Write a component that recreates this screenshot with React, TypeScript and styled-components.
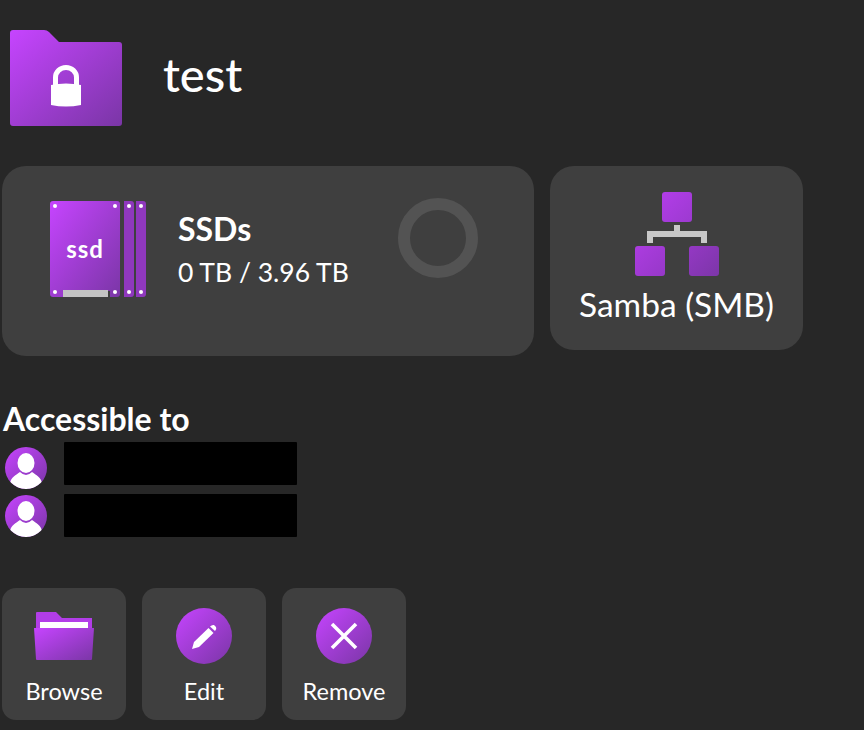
import React from 'react';
import styled, {createGlobalStyle} from "styled-components";

const GRADIENT = 'linear-gradient(135deg, #c644ff 0%, #7a36a6 100%)';

const GlobalStyle = createGlobalStyle`
    html, body {
        margin: 0;
        padding: 0;
        background-color: #272727;
    }
    body {
        font-family: "Lato", "Open Sans", sans-serif;
        color: #fff;
    }
`
const Page = styled.div`
    width: 864px;
    height: 730px;
    overflow: hidden;
    padding: 30px 0 0 2px;
    box-sizing: border-box;
`
const Header = styled.header`
    display: flex;
    align-items: center;
    gap: 41px;
    height: 96px;
    padding-left: 8px;
`
const Title = styled.h1`
    margin: -8px 0 0;
    font-size: 47px;
    font-weight: 500;
    line-height: 1;
`
const CardRow = styled.section`
    display: flex;
    align-items: flex-start;
    gap: 16px;
    margin-top: 40px;
`
const StorageCard = styled.article`
    display: flex;
    align-items: flex-start;
    box-sizing: border-box;
    width: 532px;
    height: 190px;
    padding: 32px 56px 0 48px;
    border-radius: 24px;
    background-color: #3f3f3f;
`
const StorageInfo = styled.div`
    margin: 13px 0 0 32px;
`
const StorageName = styled.h3`
    margin: 0;
    font-size: 32px;
    font-weight: 700;
    line-height: 36px;
`
const StorageSize = styled.p`
    margin: 9px 0 0;
    font-size: 26.5px;
    font-weight: 400;
    line-height: 32px;
`
const UsageRing = styled.div`
    box-sizing: border-box;
    width: 80px;
    height: 80px;
    margin-left: auto;
    border: 12px solid #535353;
    border-radius: 50%;
`
const SsdIcon = styled.svg`
    display: block;
    margin-top: 3px;
    flex: none;
`
const ProtocolCard = styled.article`
    display: flex;
    flex-direction: column;
    align-items: center;
    box-sizing: border-box;
    width: 253px;
    height: 184px;
    padding-top: 26px;
    border-radius: 24px;
    background-color: #3f3f3f;
`
const ProtocolLabel = styled.span`
    margin-top: 8px;
    font-size: 33.5px;
    line-height: 40px;
    white-space: nowrap;
`
const AccessSection = styled.section`
    margin-top: 46px;
`
const AccessTitle = styled.h2`
    margin: -1px 0 5px 1px;
    font-size: 32px;
    font-weight: 700;
    line-height: 36px;
`
const UserRow = styled.div<{$avatarTop: number}>`
    display: flex;
    align-items: flex-start;
    gap: 17px;
    height: 52px;
    padding-left: 3px;

    & > :first-child {
        margin-top: ${props => props.$avatarTop}px;
    }
`
const Avatar = styled.div`
    width: 42px;
    height: 42px;
    flex: none;
    overflow: hidden;
    border-radius: 50%;
    background: ${GRADIENT};
`
const Redacted = styled.div`
    width: 233px;
    height: 43px;
    border-radius: 1px;
    background-color: #000;
`
const Actions = styled.section`
    display: flex;
    gap: 16px;
    margin-top: 42px;
`
const ActionButton = styled.button`
    display: flex;
    flex-direction: column;
    align-items: center;
    box-sizing: border-box;
    width: 124px;
    height: 132px;
    padding: 20px 0 0;
    border: 0;
    border-radius: 14px;
    background-color: #3f3f3f;
    color: #fff;
    font-family: inherit;
    cursor: pointer;
`
const ActionIcon = styled.span<{$plain?: boolean}>`
    display: flex;
    align-items: center;
    justify-content: center;
    width: 56px;
    height: 56px;
    border-radius: 50%;
    background: ${props => props.$plain ? 'none' : GRADIENT};
`
const ActionLabel = styled.span`
    margin-top: 13px;
    font-size: 23.5px;
    line-height: 28px;
`

const Gradient = ({id}: {id: string}) => (
    <defs>
        <linearGradient id={id} x1="0" y1="0" x2="1" y2="1">
            <stop offset="0" stopColor="#c644ff"/>
            <stop offset="1" stopColor="#7a36a6"/>
        </linearGradient>
    </defs>
);

const LockedFolder = () => (
    <svg width="112" height="96" viewBox="0 0 112 96">
        <Gradient id="lockFolder"/>
        <path d="M3 0H34Q37 0 39 2L49 12H109Q112 12 112 15V93Q112 96 109 96H3Q0 96 0 93V3Q0 0 3 0Z" fill="url(#lockFolder)"/>
        <path d="M45.5 55V47.5A10.5 10 0 0 1 66.5 47.5V55" fill="none" stroke="#fff" strokeWidth="5"/>
        <path d="M41 55Q56 52 71 55V75Q56 78 41 75Z" fill="#fff"/>
    </svg>
);

const Ssd = () => (
    <SsdIcon width="96" height="96" viewBox="0 0 96 96">
        <Gradient id="ssdBody"/>
        <path d="M3 0H67Q70 0 70 3V93Q70 96 67 96H60V90H13V96H3Q0 96 0 93V3Q0 0 3 0Z" fill="url(#ssdBody)"/>
        <path d="M74 0H81Q84 0 84 3V93Q84 96 81 96H74Z" fill="#8f38bd"/>
        <path d="M86 0H93Q96 0 96 3V93Q96 96 93 96H86Z" fill="#8f38bd"/>
        <rect x="13" y="89" width="45" height="7" fill="#c4c4c4"/>
        <g fill="#fff">
            <circle cx="5" cy="5" r="2"/>
            <circle cx="65" cy="5" r="2"/>
            <circle cx="5" cy="91" r="2"/>
            <circle cx="65" cy="91" r="2"/>
            <circle cx="79" cy="5" r="2"/>
            <circle cx="91" cy="5" r="2"/>
            <circle cx="79" cy="91" r="2"/>
            <circle cx="91" cy="91" r="2"/>
        </g>
        <text x="35" y="57" textAnchor="middle" fill="#fff" fontSize="24" letterSpacing="1" fontWeight="700" fontFamily="Lato, sans-serif">ssd</text>
    </SsdIcon>
);

const Network = () => (
    <svg width="84" height="84" viewBox="0 0 84 84">
        <defs>
            <linearGradient id="netTop" x1="0" y1="0" x2="1" y2="1">
                <stop offset="0" stopColor="#b23de8"/>
                <stop offset="1" stopColor="#9c3ad0"/>
            </linearGradient>
            <linearGradient id="netLeft" x1="0" y1="0" x2="1" y2="1">
                <stop offset="0" stopColor="#ac3ce0"/>
                <stop offset="1" stopColor="#9638c8"/>
            </linearGradient>
            <linearGradient id="netRight" x1="0" y1="0" x2="1" y2="1">
                <stop offset="0" stopColor="#9438c4"/>
                <stop offset="1" stopColor="#7c36a8"/>
            </linearGradient>
        </defs>
        <rect x="27" y="0" width="30" height="30" rx="3" fill="url(#netTop)"/>
        <rect x="0" y="54" width="30" height="30" rx="3" fill="url(#netLeft)"/>
        <rect x="54" y="54" width="30" height="30" rx="3" fill="url(#netRight)"/>
        <path d="M39 33H45V39H72V51H66V45H18V51H12V39H39Z" fill="#c8c8c8"/>
    </svg>
);

const UserGlyph = () => (
    <svg width="42" height="42" viewBox="0 0 42 42" style={{display: 'block'}}>
        <ellipse cx="21" cy="16" rx="8.5" ry="10" fill="#fff"/>
        <path d="M5 36C6 30 11 28 15 25Q21 31 27 25C31 28 36 30 37 36Q30 42 21 42Q12 42 5 36Z" fill="#fff"/>
    </svg>
);

const OpenFolder = () => (
    <svg width="60" height="48" viewBox="0 0 60 48" style={{flex: 'none'}}>
        <Gradient id="openFolder"/>
        <path d="M2 1Q2 0 3 0H22L28 6H58V17H2Z" fill="#b23de8"/>
        <rect x="6" y="10" width="48" height="6" fill="#fff"/>
        <path d="M0 16H60L58 47Q58 48 57 48H3Q2 48 2 47Z" fill="url(#openFolder)"/>
    </svg>
);

const Pencil = () => (
    <svg width="28" height="28" viewBox="0 0 28 28">
        <path d="M2 27L4 20L18.5 6L23.5 11L9 25Z" fill="#fff"/>
        <path d="M20 4.5Q22 2.5 24 3L26 5Q27 7 25 9Z" fill="#fff"/>
    </svg>
);

const Cross = () => (
    <svg width="28" height="28" viewBox="0 0 28 28">
        <path d="M2 2L26 26M26 2L2 26" stroke="#fff" strokeWidth="3.6" fill="none"/>
    </svg>
);

const users = [{id: 1, avatarTop: 5}, {id: 2, avatarTop: 1}];

const App = () => {
    return (
        <Page>
            <GlobalStyle/>
            <Header>
                <LockedFolder/>
                <Title>test</Title>
            </Header>
            <CardRow>
                <StorageCard>
                    <Ssd/>
                    <StorageInfo>
                        <StorageName>SSDs</StorageName>
                        <StorageSize>0 TB / 3.96 TB</StorageSize>
                    </StorageInfo>
                    <UsageRing/>
                </StorageCard>
                <ProtocolCard>
                    <Network/>
                    <ProtocolLabel>Samba (SMB)</ProtocolLabel>
                </ProtocolCard>
            </CardRow>
            <AccessSection>
                <AccessTitle>Accessible to</AccessTitle>
                {users.map(user => (
                    <UserRow key={user.id} $avatarTop={user.avatarTop}>
                        <Avatar><UserGlyph/></Avatar>
                        <Redacted/>
                    </UserRow>
                ))}
            </AccessSection>
            <Actions>
                <ActionButton>
                    <ActionIcon $plain><OpenFolder/></ActionIcon>
                    <ActionLabel>Browse</ActionLabel>
                </ActionButton>
                <ActionButton>
                    <ActionIcon><Pencil/></ActionIcon>
                    <ActionLabel>Edit</ActionLabel>
                </ActionButton>
                <ActionButton>
                    <ActionIcon><Cross/></ActionIcon>
                    <ActionLabel>Remove</ActionLabel>
                </ActionButton>
            </Actions>
        </Page>
    );
};

export default App;
